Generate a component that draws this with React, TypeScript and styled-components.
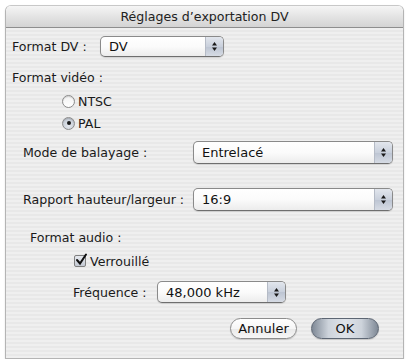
import styled, { createGlobalStyle } from 'styled-components';

const GlobalStyle = createGlobalStyle`
  html, body {
    margin: 0;
    padding: 0;
    background: #ffffff;
  }
  body {
    font-family: "DejaVu Sans", "Liberation Sans", sans-serif;
    font-size: 12.6px;
    color: #1a1a1a;
  }
`;

// Window frame
const Window = styled.div`
  margin: 5px 0 0 5px;
  width: 399px;
  height: 354px;
  box-sizing: border-box;
  border: 1px solid #b4b4b4;
  border-top-color: #c8c8c8;
  border-radius: 6px 6px 0 0;
  overflow: hidden;
  display: flex;
  flex-direction: column;
  box-shadow: 0 1px 2px rgba(0, 0, 0, 0.12);
`;

const TitleBar = styled.div`
  height: 21px;
  flex-shrink: 0;
  display: flex;
  align-items: center;
  justify-content: center;
  background: linear-gradient(#f5f5f5, #e2e2e2 55%, #d4d4d4);
  border-bottom: 1px solid #8e8e8e;
  font-size: 12.6px;
  color: #222;
`;

const Body = styled.div`
  flex: 1;
  padding: 0 6px;
  background: repeating-linear-gradient(
    to bottom,
    #efefef 0px,
    #efefef 2px,
    #e8e8e8 2px,
    #e8e8e8 4px
  );
  display: flex;
  flex-direction: column;
`;

const Row = styled.div<{ $top: number; $height: number; $indent?: number }>`
  display: flex;
  align-items: center;
  margin-top: ${(p) => p.$top}px;
  height: ${(p) => p.$height}px;
  padding-left: ${(p) => p.$indent ?? 0}px;
`;

const Label = styled.span<{ $width?: number }>`
  white-space: nowrap;
  ${(p) => (p.$width ? `width: ${p.$width}px; flex-shrink: 0;` : '')}
`;

// Popup menus
const Popup = styled.div<{ $width: number; $height: number }>`
  width: ${(p) => p.$width}px;
  height: ${(p) => p.$height}px;
  box-sizing: border-box;
  display: flex;
  border: 1px solid #8a8a8a;
  border-bottom-color: #6e6e6e;
  border-radius: 5px;
  overflow: hidden;
  background: linear-gradient(#ffffff, #fbfbfb 50%, #ececec);
  box-shadow: 0 1px 1px rgba(0, 0, 0, 0.12);
`;

const PopupText = styled.div`
  flex: 1;
  display: flex;
  align-items: center;
  padding-left: 8px;
  font-size: 13px;
  color: #111;
`;

const PopupArrows = styled.div`
  width: 17px;
  border-left: 1px solid #b5bbc6;
  background: linear-gradient(#e2e6ed, #c9d0dc 50%, #bcc4d2 51%, #d6dbe4);
  display: flex;
  align-items: center;
  justify-content: center;
`;

const Arrows = () => (
  <svg width="7" height="11" viewBox="0 0 7 11">
    <path d="M3.5 1 L6 4.5 L1 4.5 Z" fill="#1a1a1a" />
    <path d="M3.5 10 L6 6.5 L1 6.5 Z" fill="#1a1a1a" />
  </svg>
);

function PopupMenu({ value, width, height }: { value: string; width: number; height: number }) {
  return (
    <Popup $width={width} $height={height}>
      <PopupText>{value}</PopupText>
      <PopupArrows>
        <Arrows />
      </PopupArrows>
    </Popup>
  );
}

// Radio and checkbox
const Radio = styled.span<{ $on?: boolean }>`
  width: 13px;
  height: 13px;
  box-sizing: border-box;
  border-radius: 50%;
  border: 1px solid #8b8b8b;
  background: ${(p) =>
    p.$on
      ? 'radial-gradient(circle at 50% 70%, #e4e8ee, #b9c0cb)'
      : 'linear-gradient(#f2f2f2, #ffffff)'};
  display: flex;
  align-items: center;
  justify-content: center;
  margin-right: 3px;
  box-shadow: inset 0 1px 1px rgba(0, 0, 0, 0.15);
  &::after {
    content: '';
    display: ${(p) => (p.$on ? 'block' : 'none')};
    width: 4px;
    height: 4px;
    border-radius: 50%;
    background: #1a1a1a;
  }
`;

const CheckBox = styled.span`
  width: 12px;
  height: 12px;
  box-sizing: border-box;
  border: 1px solid #7f7f7f;
  border-radius: 2px;
  background: linear-gradient(#e6e9ee, #c3c9d3);
  position: relative;
  margin-right: 4px;
  svg {
    position: absolute;
    left: 0;
    top: -3px;
  }
`;

const Check = () => (
  <svg width="13" height="13" viewBox="0 0 13 13">
    <path d="M2 7 L5 10.5 L11 1.5" fill="none" stroke="#111" strokeWidth="2" strokeLinecap="round" />
  </svg>
);

// Buttons
const ButtonRow = styled(Row)`
  justify-content: flex-end;
  padding-right: 18px;
  gap: 14px;
`;

const Button = styled.div<{ $primary?: boolean }>`
  width: ${(p) => (p.$primary ? 68 : 67)}px;
  height: 21px;
  box-sizing: border-box;
  border-radius: 11px;
  border: 1px solid ${(p) => (p.$primary ? '#5d6673' : '#8c8c8c')};
  display: flex;
  align-items: center;
  justify-content: center;
  font-size: 13px;
  color: #111;
  background: ${(p) =>
    p.$primary
      ? 'linear-gradient(to right, #7f8996, #cdd3db 25%, #dfe3e9 50%, #cdd3db 75%, #7f8996)'
      : 'linear-gradient(#ffffff, #f6f6f6 50%, #e9e9e9 51%, #f7f7f7)'};
  box-shadow: 0 1px 1px rgba(0, 0, 0, 0.15);
`;

export default function App() {
  return (
    <>
      <GlobalStyle />
      <Window>
        <TitleBar>Réglages d’exportation DV</TitleBar>
        <Body>
          <Row $top={8} $height={21}>
            <Label $width={88}>Format DV :</Label>
            <PopupMenu value="DV" width={124} height={21} />
          </Row>
          <Row $top={12} $height={16}>
            <Label>Format vidéo :</Label>
          </Row>
          <Row $top={7} $height={18} $indent={50}>
            <Radio />
            <Label>NTSC</Label>
          </Row>
          <Row $top={4} $height={18} $indent={50}>
            <Radio $on />
            <Label>PAL</Label>
          </Row>
          <Row $top={9} $height={23} $indent={11}>
            <Label $width={170}>Mode de balayage :</Label>
            <PopupMenu value="Entrelacé" width={200} height={23} />
          </Row>
          <Row $top={24} $height={23} $indent={11}>
            <Label $width={170}>Rapport hauteur/largeur :</Label>
            <PopupMenu value="16:9" width={200} height={23} />
          </Row>
          <Row $top={18} $height={16} $indent={18}>
            <Label>Format audio :</Label>
          </Row>
          <Row $top={7} $height={18} $indent={62}>
            <CheckBox>
              <Check />
            </CheckBox>
            <Label>Verrouillé</Label>
          </Row>
          <Row $top={11} $height={22} $indent={61}>
            <Label $width={84}>Fréquence :</Label>
            <PopupMenu value="48,000 kHz" width={129} height={22} />
          </Row>
          <ButtonRow $top={14} $height={22}>
            <Button>Annuler</Button>
            <Button $primary>OK</Button>
          </ButtonRow>
        </Body>
      </Window>
    </>
  );
}
